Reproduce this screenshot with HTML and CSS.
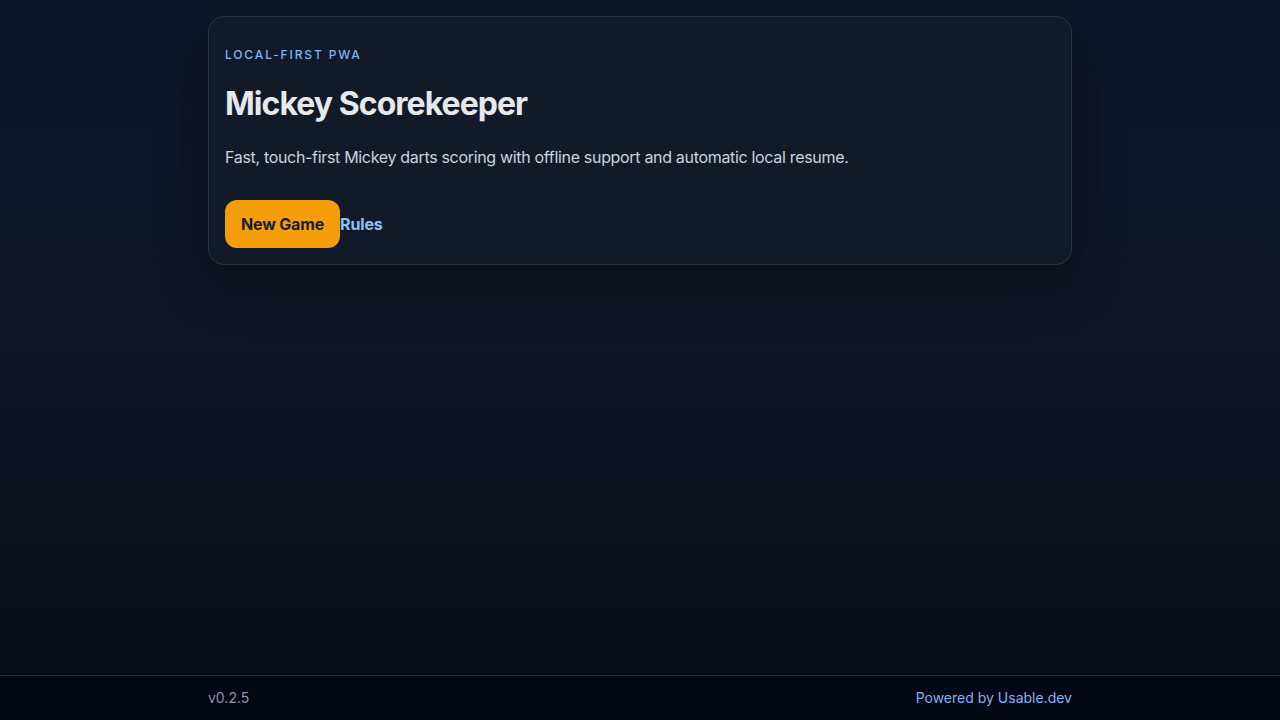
FILE: index.html
```html
<!DOCTYPE html>
<html lang="en">
<head>
<meta charset="utf-8">
<title>Mickey Scorekeeper</title>
<link rel="stylesheet" href="styles.css">
</head>
<body>
<main class="main">
  <section class="card">
    <p class="eyebrow">LOCAL-FIRST PWA</p>
    <h1 class="title">Mickey Scorekeeper</h1>
    <p class="lede">Fast, touch-first Mickey darts scoring with offline support and automatic local resume.</p>
    <div class="actions">
      <button class="btn-primary" type="button">New Game</button>
      <a class="link" href="#">Rules</a>
    </div>
  </section>
</main>
<footer class="footer">
  <div class="footer-inner">
    <span class="version">v0.2.5</span>
    <a class="powered" href="#">Powered by Usable.dev</a>
  </div>
</footer>
</body>
</html>
```
FILE: styles.css
```css
* { box-sizing: border-box; }
html, body { height: 100%; }
body {
  margin: 0;
  min-height: 100vh;
  display: flex;
  flex-direction: column;
  font-family: Inter, "Noto Sans", "Liberation Sans", sans-serif;
  color: #e5e7eb;
  background: linear-gradient(180deg, #0e1629 0%, #111729 45%, #070b16 100%);
}
.main {
  flex: 1;
  width: 864px;
  margin: 0 auto;
  padding-top: 16px;
}
.card {
  background: #121a2a;
  border: 1px solid #2a3242;
  border-radius: 16px;
  padding: 30px 16px 16px;
  box-shadow: 0 20px 50px rgba(0, 0, 0, 0.35);
}
.eyebrow {
  margin: 0;
  font-size: 12px;
  line-height: 16px;
  letter-spacing: 0.155em;
  font-weight: 500;
  color: #7fb6f2;
}
.title {
  margin: 22px 0 0;
  font-size: 32px;
  line-height: 38px;
  font-weight: 700;
  letter-spacing: -0.03em;
  color: #e6e8ec;
}
.lede {
  margin: 22px 0 0;
  font-size: 16px;
  line-height: 24px;
  letter-spacing: -0.02em;
  color: #cbd3de;
}
.actions {
  margin-top: 31px;
  display: flex;
  align-items: center;
}
.btn-primary {
  height: 48px;
  padding: 0 16px;
  border: none;
  border-radius: 12px;
  background: #f59e0b;
  color: #1a1d26;
  font-family: inherit;
  font-size: 16px;
  font-weight: 700;
  letter-spacing: -0.01em;
  cursor: pointer;
}
.link {
  color: #8ec0f5;
  font-size: 16px;
  font-weight: 700;
  letter-spacing: -0.01em;
  text-decoration: none;
}
.footer {
  border-top: 1px solid #252b3b;
  background: #030615;
}
.footer-inner {
  width: 864px;
  margin: 0 auto;
  display: flex;
  justify-content: space-between;
  align-items: center;
  padding: 12px 0;
  font-size: 14px;
  line-height: 20px;
}
.version { color: #8a94a6; }
.powered { color: #7fb6f2; text-decoration: none; }
```
